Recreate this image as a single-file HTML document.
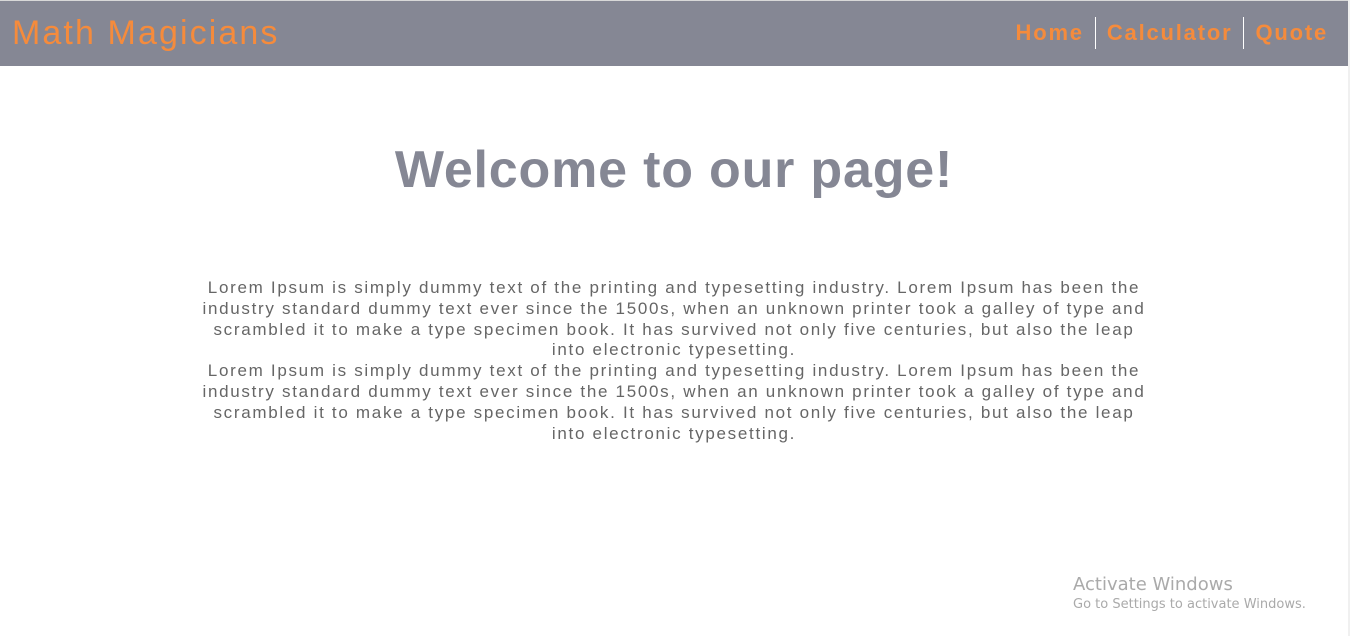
<!DOCTYPE html>
<html><head><style>
html,body{margin:0;padding:0;background:#fff;width:1350px;height:636px;overflow:hidden;font-family:"Liberation Sans",sans-serif;}
.top{height:1px;background:#d8d8d8;}
header{position:absolute;top:1px;left:0;width:1348px;height:65px;background:#858794;}
.logo{position:absolute;left:12px;top:13px;font-size:34px;color:#f58b3c;letter-spacing:2.1px;}
nav{position:absolute;right:20px;top:16px;display:flex;}
nav a{color:#f58b3c;font-weight:bold;font-size:22px;padding:0 11px;line-height:32px;text-decoration:none;letter-spacing:1.8px;}
nav a+a{border-left:1px solid #fff;}
nav a:last-child{padding-right:0}
.side{position:absolute;right:0;top:0;width:2px;height:636px;background:#f0f0f0;}
h1{position:absolute;top:140px;left:0;width:1348px;text-align:center;margin:0;font-size:52px;color:#858794;font-weight:bold;letter-spacing:0.8px;}
p{position:absolute;top:278px;left:100px;width:1148px;text-align:center;margin:0;font-size:17px;line-height:20.8px;color:#666;letter-spacing:1.7px;white-space:nowrap;}
.win{position:absolute;left:1073px;top:574px;color:#aaa;font-family:"DejaVu Sans",sans-serif;}
.win .a{font-size:18px;}
.win .b{font-size:13px;margin-top:2px;}
</style></head><body>
<div class="top"></div>
<header><div class="logo">Math Magicians</div>
<nav><a>Home</a><a>Calculator</a><a>Quote</a></nav></header>
<div class="side"></div>
<h1>Welcome to our page!</h1>
<p>Lorem Ipsum is simply dummy text of the printing and typesetting industry. Lorem Ipsum has been the<br>industry standard dummy text ever since the 1500s, when an unknown printer took a galley of type and<br>scrambled it to make a type specimen book. It has survived not only five centuries, but also the leap<br>into electronic typesetting.<br>Lorem Ipsum is simply dummy text of the printing and typesetting industry. Lorem Ipsum has been the<br>industry standard dummy text ever since the 1500s, when an unknown printer took a galley of type and<br>scrambled it to make a type specimen book. It has survived not only five centuries, but also the leap<br>into electronic typesetting.</p>
<div class="win"><div class="a">Activate Windows</div><div class="b">Go to Settings to activate Windows.</div></div>
</body></html>
